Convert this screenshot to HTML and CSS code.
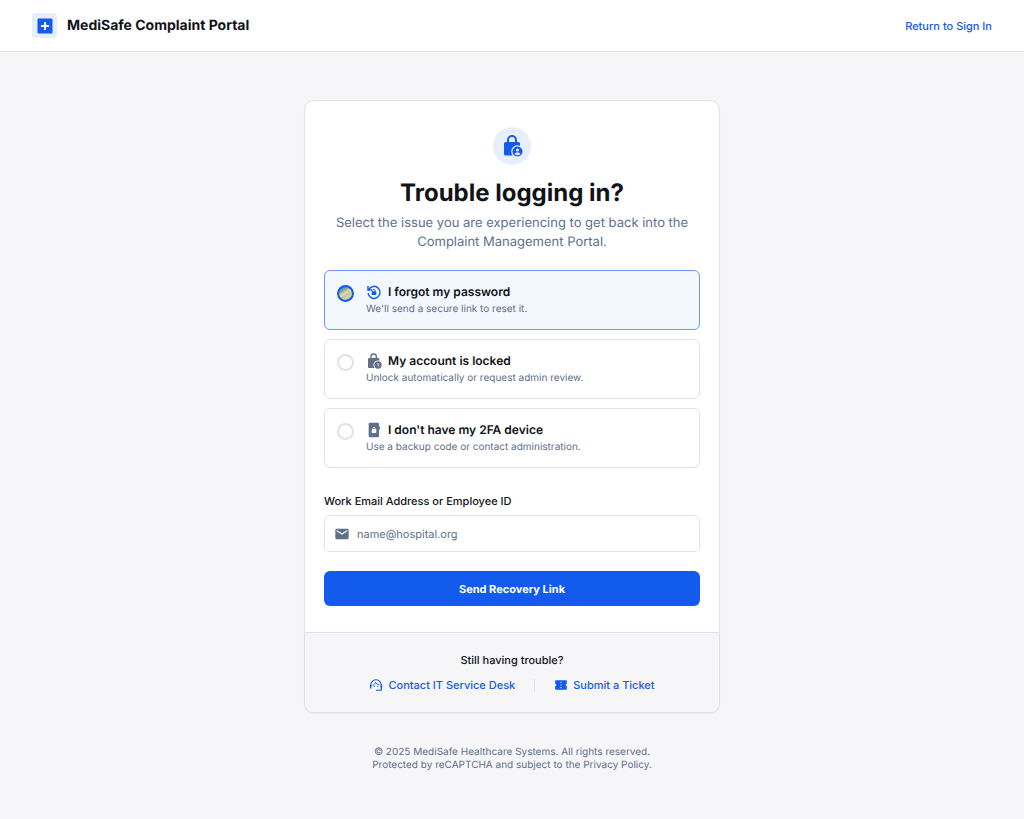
FILE: index.html
```html
<!DOCTYPE html>
<html lang="en">
  <head>
    <meta charset="UTF-8" />
    <meta name="viewport" content="width=device-width, initial-scale=1.0" />
    <title>MediSafe Complaint Portal</title>
    <link rel="stylesheet" href="styles.css">
  </head>
  <body>
    <header class="topbar">
      <div class="brand">
        <span class="brand-logo">
          <svg viewBox="0 0 16 16" width="16" height="16" aria-hidden="true">
            <rect x=".5" y=".5" width="15" height="15" rx="1" fill="#135bec" />
            <path d="M8 4v8M4 8h8" stroke="#fff" stroke-width="2" />
          </svg>
        </span>
        <span class="brand-name">MediSafe Complaint Portal</span>
      </div>
      <a class="link" href="#">Return to Sign In</a>
    </header>

    <main class="page">
      <div class="card">
        <form class="card-body">
          <div class="intro">
            <span class="intro-icon">
              <svg viewBox="0 0 24 24" width="24" height="24" aria-hidden="true">
                <path d="M8 9V6a4 4 0 0 1 8 0v3" fill="none" stroke="currentColor" stroke-width="2" />
                <rect x="4" y="8" width="16" height="13.500" rx="1.600" fill="currentColor" />
                <circle cx="17.500" cy="17.500" r="6.300" fill="#e7eefd" />
                <circle cx="17.500" cy="17.500" r="5" fill="currentColor" />
                <circle cx="17.500" cy="16" r="1.500" fill="#e7eefd" />
                <path d="M14.500 19.700a3.700 3.700 0 0 1 6 0 3.700 3.700 0 0 1-6 0z" fill="#e7eefd" />
              </svg>
            </span>
            <h1 class="title">Trouble logging in?</h1>
            <p class="subtitle">Select the issue you are experiencing to get back into the Complaint Management Portal.</p>
          </div>

          <div class="options">
            <label class="option">
              <input class="radio" type="radio" name="issue" value="password" checked />
              <span class="option-text">
                <span class="option-title">
                  <svg viewBox="0 0 24 24" width="16" height="16" aria-hidden="true">
                    <path d="M4 8.500A9 9 0 1 1 3.100 13.500M3 3v6h6" fill="none" stroke="currentColor" stroke-width="2.200" />
                    <rect x="8.500" y="11" width="7" height="5.500" rx="1" fill="currentColor" />
                    <path d="M10.300 11.500V9.500a1.700 1.700 0 0 1 3.400 0v2" fill="none" stroke="currentColor" stroke-width="1.300" />
                  </svg>
                  I forgot my password
                </span>
                <span class="option-hint">We'll send a secure link to reset it.</span>
              </span>
            </label>
            <label class="option">
              <input class="radio" type="radio" name="issue" value="locked" />
              <span class="option-text">
                <span class="option-title">
                  <svg viewBox="0 0 24 24" width="16" height="16" aria-hidden="true">
                    <path d="M7.500 8V5.500a4 4 0 0 1 8 0V8" fill="none" stroke="currentColor" stroke-width="2" />
                    <rect x="3" y="7.500" width="17" height="15" rx="1.600" fill="currentColor" />
                    <circle cx="18" cy="18" r="6.800" fill="#fff" />
                    <circle cx="18" cy="18" r="5.500" fill="currentColor" />
                    <path d="M18 15v3.200l2 2" fill="none" stroke="#fff" stroke-width="1.300" />
                  </svg>
                  My account is locked
                </span>
                <span class="option-hint">Unlock automatically or request admin review.</span>
              </span>
            </label>
            <label class="option">
              <input class="radio" type="radio" name="issue" value="device" />
              <span class="option-text">
                <span class="option-title">
                  <svg viewBox="0 0 24 24" width="16" height="16" aria-hidden="true">
                    <rect x="4" y="1" width="15.500" height="22" rx="2" fill="currentColor" />
                    <path d="M19 7h2v4h-2z" fill="currentColor" />
                    <rect x="8.500" y="11" width="7" height="5.500" rx="1" fill="#fff" />
                    <path d="M10.300 11.500V10a1.700 1.700 0 0 1 3.400 0v1.500" fill="none" stroke="#fff" stroke-width="1.300" />
                  </svg>
                  I don't have my 2FA device
                </span>
                <span class="option-hint">Use a backup code or contact administration.</span>
              </span>
            </label>
          </div>

          <div class="field">
            <label class="field-label" for="account">Work Email Address or Employee ID</label>
            <div class="field-box">
              <svg viewBox="0 0 24 24" width="16" height="16" aria-hidden="true">
                <path d="M20 4H4a2 2 0 0 0-2 2v12a2 2 0 0 0 2 2h16a2 2 0 0 0 2-2V6a2 2 0 0 0-2-2zm0 4-8 5-8-5V6l8 5 8-5z" fill="currentColor" />
              </svg>
              <input class="field-input" type="text" id="account" placeholder="name@hospital.org" />
            </div>
          </div>

          <button class="submit" type="submit">Send Recovery Link</button>
        </form>

        <div class="card-footer">
          <p class="help-title">Still having trouble?</p>
          <div class="help-links">
            <a class="link" href="#">
              <svg viewBox="0 0 24 24" width="14" height="14" aria-hidden="true">
                <path d="M3 15v-3a9 9 0 0 1 18 0v9h-9" fill="none" stroke="currentColor" stroke-width="2" />
                <path d="M1.500 12H4v6H3a1.500 1.500 0 0 1-1.500-1.500zM20 12h2.500v4.500A1.500 1.500 0 0 1 21 18h-1z" fill="currentColor" />
                <path d="M6 12.500c3-.500 4.500-2.500 5-5 1.500 2.500 4 3.700 6.800 3.700" fill="none" stroke="currentColor" stroke-width="1.600" />
                <circle cx="9" cy="14" r="1.100" fill="currentColor" />
                <circle cx="15" cy="14" r="1.100" fill="currentColor" />
              </svg>
              Contact IT Service Desk
            </a>
            <span class="divider"></span>
            <a class="link" href="#">
              <svg viewBox="0 0 24 24" width="14" height="14" aria-hidden="true">
                <path d="M3 4h18a1 1 0 0 1 1 1v5a2 2 0 0 0 0 4v5a1 1 0 0 1-1 1H3a1 1 0 0 1-1-1v-5a2 2 0 0 0 0-4V5a1 1 0 0 1 1-1z" fill="currentColor" />
                <path d="M12 6.500v11" stroke="#f6f6f8" stroke-width="1.600" stroke-dasharray="2 2.500" />
              </svg>
              Submit a Ticket
            </a>
          </div>
        </div>
      </div>

      <footer class="legal">
        <p>© 2025 MediSafe Healthcare Systems. All rights reserved.</p>
        <p>Protected by reCAPTCHA and subject to the Privacy Policy.</p>
      </footer>
    </main>
  </body>
</html>
```
FILE: styles.css
```css
* {
  box-sizing: border-box;
  margin: 0;
  padding: 0;
}

body {
  min-height: 100vh;
  background-color: #f6f6f8;
  font-family: Inter, "Liberation Sans", sans-serif;
  font-size: 11px;
  line-height: 16px;
  color: #111318;
  text-rendering: geometricPrecision;
}

svg {
  display: block;
  flex-shrink: 0;
}

.topbar {
  display: flex;
  align-items: center;
  justify-content: space-between;
  padding: 13px 32px;
  background-color: #fff;
  border-bottom: 1px solid #dfe2eb;
}

.brand {
  display: flex;
  align-items: center;
  gap: 10px;
}

.brand-logo {
  display: flex;
  align-items: center;
  justify-content: center;
  width: 25px;
  height: 25px;
  border-radius: 3px;
  background-color: #e7eefd;
}

.brand-name {
  font-size: 14px;
  font-weight: 700;
  line-height: 20px;
}

.link {
  display: flex;
  align-items: center;
  gap: 5px;
  font-weight: 500;
  color: #135bec;
  text-decoration: none;
}

.page {
  display: flex;
  flex-direction: column;
  align-items: center;
  padding: 48px 16px;
}

.card {
  width: 100%;
  max-width: 416px;
  border: 1px solid #dfe2eb;
  border-radius: 10px;
  background-color: #fff;
  box-shadow: 0 1px 2px rgba(0, 0, 0, 0.05);
  overflow: hidden;
}

.card-body {
  padding: 26px 19px;
}

.intro {
  display: flex;
  flex-direction: column;
  align-items: center;
  text-align: center;
}

.intro-icon {
  display: flex;
  align-items: center;
  justify-content: center;
  width: 38px;
  height: 38px;
  margin-bottom: 13px;
  border-radius: 50%;
  background-color: #e7eefd;
  color: #135bec;
}

.title {
  margin-bottom: 6px;
  font-size: 24px;
  font-weight: 700;
  line-height: 30px;
}

.subtitle {
  font-size: 13px;
  line-height: 19px;
  color: #616f89;
}

.options {
  display: flex;
  flex-direction: column;
  gap: 9px;
  margin-top: 18px;
}

.option {
  display: flex;
  gap: 12px;
  padding: 12px;
  border: 1px solid #dfe2eb;
  border-radius: 6px;
  cursor: pointer;
  min-height: 60px;
}

.option:has(.radio:checked) {
  border-color: #7195f0;
  background-color: #f3f7fe;
}

.radio {
  appearance: none;
  flex-shrink: 0;
  width: 17px;
  height: 17px;
  margin-top: 2px;
  border: 2px solid #dfe2eb;
  border-radius: 50%;
  background-color: #fff;
}

.radio:checked {
  border-color: #135bec;
  background-image: linear-gradient(150deg, #3f87a0 10%, #8fae9c 30%, #e3dca8 48%, #b9c69f 62%, #dcd7a5 75%, #4b8ca0 95%);
}

.option-text {
  display: flex;
  flex-direction: column;
  gap: 2px;
  padding-top: 1px;
}

.option-title {
  display: flex;
  align-items: center;
  gap: 6px;
  font-size: 12px;
  font-weight: 600;
}

.option-title svg {
  color: #616f89;
}

.radio:checked + .option-text svg {
  color: #135bec;
}

.option-hint {
  font-size: 10px;
  line-height: 15px;
  color: #616f89;
}

.field {
  margin-top: 25px;
}

.field-label {
  display: block;
  margin-bottom: 6px;
  font-weight: 500;
}

.field-box {
  display: flex;
  align-items: center;
  gap: 7px;
  padding: 0 9px;
  border: 1px solid #dfe2eb;
  border-radius: 6px;
  color: #616f89;
}

.field-input {
  flex: 1;
  min-width: 0;
  height: 35px;
  border: none;
  outline: none;
  background: none;
  font-family: inherit;
  font-size: 11px;
  color: #111318;
  text-rendering: inherit;
}

.field-input::placeholder {
  color: #616f89;
}

.submit {
  display: block;
  width: 100%;
  height: 35px;
  margin-top: 19px;
  border: none;
  border-radius: 6px;
  background-color: #135bec;
  font-family: inherit;
  font-size: 11px;
  font-weight: 700;
  color: #fff;
  text-rendering: inherit;
  cursor: pointer;
}

.card-footer {
  display: flex;
  flex-direction: column;
  align-items: center;
  gap: 9px;
  padding: 19px;
  border-top: 1px solid #dfe2eb;
  background-color: #f6f6f8;
}

.help-title {
  font-weight: 500;
}

.help-links {
  display: flex;
  align-items: center;
  gap: 19px;
}

.divider {
  width: 1px;
  height: 13px;
  background-color: #dfe2eb;
}

.legal {
  margin-top: 33px;
  font-size: 10px;
  line-height: 13px;
  text-align: center;
  color: #616f89;
}
```
